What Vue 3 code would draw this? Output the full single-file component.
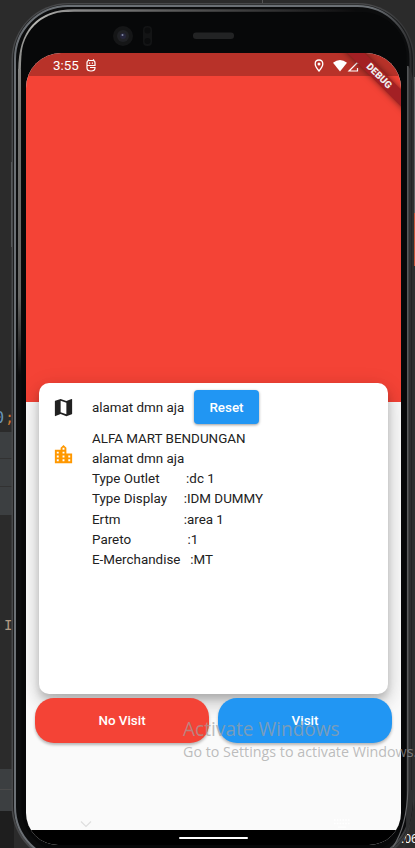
<script setup>
const details = [
  'ALFA MART BENDUNGAN',
  'alamat dmn aja',
  'Type Outlet        :dc 1',
  'Type Display     :IDM DUMMY',
  'Ertm                   :area 1',
  'Pareto                 :1',
  'E-Merchandise   :MT',
]
</script>

<template>
  <div class="desktop">
    <div class="editor">
      <div class="pane code"><span class="zero">0</span><span class="semi">;</span></div>
      <div class="pane rail tall"></div>
      <div class="pane body"><span>I</span></div>
      <div class="pane rail"></div>
      <div class="pane foot"></div>
    </div>
    <span class="notch"></span>
    <span class="edge"></span>
    <span class="edge low"></span>
    <span class="clock">:06</span>

    <div class="phone">
      <svg class="frame" viewBox="0 0 415 848" width="415" height="848">
        <defs>
          <linearGradient id="inner" gradientUnits="userSpaceOnUse" x1="0" y1="62" x2="0" y2="375">
            <stop offset="0" stop-color="#858583" />
            <stop offset=".2" stop-color="#6f6f6d" />
            <stop offset=".75" stop-color="#666664" />
            <stop offset="1" stop-color="#0c0c0d" />
          </linearGradient>
          <linearGradient id="rim" gradientUnits="userSpaceOnUse" x1="13" y1="0" x2="412" y2="0">
            <stop offset="0" stop-color="#6b7075" />
            <stop offset=".9" stop-color="#6b7075" />
            <stop offset=".98" stop-color="#3a3b3d" />
            <stop offset="1" stop-color="#2b2c2d" />
          </linearGradient>
          <linearGradient id="shell" gradientUnits="userSpaceOnUse" x1="11" y1="0" x2="415" y2="0">
            <stop offset="0" stop-color="#47484a" />
            <stop offset=".9" stop-color="#47484a" />
            <stop offset="1" stop-color="#343536" />
          </linearGradient>
          <linearGradient id="top" gradientUnits="userSpaceOnUse" x1="18" y1="0" x2="360" y2="0">
            <stop offset="0" stop-color="#8a8a88" />
            <stop offset=".05" stop-color="#b8b8b4" />
            <stop offset=".16" stop-color="#8a8a8a" />
            <stop offset=".45" stop-color="#5a5a5a" />
            <stop offset=".8" stop-color="#2a2a2b" />
            <stop offset="1" stop-color="#0a0a0b" />
          </linearGradient>
        </defs>
        <rect x="11.500" y="3" width="403" height="860" rx="57" fill="url(#shell)" />
        <rect x="13" y="4.500" width="400" height="856" rx="55" fill="#1b1c1d" />
        <rect x="15" y="6" width="395.500" height="854" rx="53" fill="#0b0c0d" stroke="url(#rim)" stroke-width="2" />
        <path d="M408 66Q414 72 414 96V780Q414 820 402 848H406L408 66Z" fill="#2e2f30" />
        <path d="M411.500 80V790" fill="none" stroke="#232425" stroke-width="1" />
        <path d="M19.500 70Q20 11 74 10.500H355" fill="none" stroke="url(#top)" stroke-width="2.600" />
        <rect x="18" y="69" width="3" height="306" fill="url(#inner)" />
        <rect x="21.500" y="12" width="385" height="841" rx="45" fill="#070809" />
        <path d="M407.800 66V790Q407 826 393 847" fill="none" stroke="#67686a" stroke-width="1.200" />
        <path d="M11.500 162V247" stroke="#55585a" />
        <circle cx="123" cy="36" r="10" fill="#151617" />
        <circle cx="123" cy="36" r="6" fill="#202125" />
        <circle cx="123" cy="36" r="3" fill="#25253b" />
        <circle cx="122.500" cy="35" r="1" fill="#8188a3" />
        <rect x="143" y="26" width="9" height="20" rx="4" fill="#131415" />
        <circle cx="147.500" cy="30.500" r="3" fill="#0b0c0d" />
        <circle cx="147.500" cy="41" r="3" fill="#0b0c0d" />
        <rect x="193" y="32.500" width="41" height="6.500" rx="3" fill="#222324" />
      </svg>

      <div class="screen">
        <header class="status">
          <span class="time">3:55</span>
          <svg class="droid" viewBox="0 0 10 13" width="10" height="13">
            <path d="M1 6.500H9V4Q9 1.500 7 1.500H3Q1 1.500 1 4V9Q1 12 5 12Q9 12 9 9V8.500H4M2.500 .300V1.500M7.500 .300V1.500M3 4.200H4.200M5.800 4.200H7" fill="none" stroke="#fff" stroke-width="1.200" />
          </svg>
          <span class="grow"></span>
          <svg class="pin" viewBox="0 0 10 13" width="10" height="13">
            <path d="M5 1Q1.200 1 1.200 5Q1.200 7.500 5 12Q8.800 7.500 8.800 5Q8.800 1 5 1Z" fill="none" stroke="#fff" stroke-width="1.300" />
            <circle cx="5" cy="5" r="1.500" fill="#fff" />
          </svg>
          <svg class="signal" viewBox="0 0 28 13" width="28" height="13">
            <path d="M0 3.800Q7 -2 14 3.800L7 12.500Z" fill="#fff" />
            <path d="M27 1 16 12H24.500V9M25.500 2.500V5" fill="none" stroke="#fff" stroke-width="1.200" />
          </svg>
        </header>
        <div class="hero"></div>
        <section class="card">
          <div class="row address">
            <svg class="icon" viewBox="0 0 24 24" width="23" height="23">
              <path fill="#212121" d="M20.500 3l-.16.03L15 5.100 9 3 3.360 4.900c-.21.07-.36.25-.36.480V20.500c0 .28.22.5.5.5l.16-.03L9 18.900l6 2.100 5.640-1.900c.21-.07.36-.25.36-.48V3.500c0-.28-.22-.5-.5-.5zM15 19l-6-2.110V5l6 2.110V19z" />
            </svg>
            <span>alamat dmn aja</span>
            <button class="reset">Reset</button>
          </div>
          <div class="row outlet">
            <svg class="icon" viewBox="0 0 24 24" width="23" height="23">
              <path fill="#ff9800" d="M15 11V5l-3-3-3 3v2H3v14h18V11h-6zm-8 8H5v-2h2v2zm0-4H5v-2h2v2zm0-4H5V9h2v2zm6 8h-2v-2h2v2zm0-4h-2v-2h2v2zm0-4h-2V9h2v2zm0-4h-2V5h2v2zm6 12h-2v-2h2v2zm0-4h-2v-2h2v2z" />
            </svg>
            <div class="lines">
              <div v-for="line in details" :key="line">{{ line }}</div>
            </div>
          </div>
        </section>
        <div class="actions">
          <button class="no">No Visit</button>
          <button class="yes">Visit</button>
        </div>
        <div class="hints">
          <svg viewBox="0 0 12 8" width="12" height="8"><path d="M1 1.500 6 6.500 11 1.500" fill="none" stroke="#dedede" stroke-width="1.200" /></svg>
          <svg viewBox="0 0 16 9" width="16" height="9"><path d="M0 1H16M0 4.500H16" stroke="#fff" stroke-width="1.600" stroke-dasharray="1.600 1.200" /><path d="M4 8H12" stroke="#fff" /></svg>
        </div>
        <footer class="nav"><span></span></footer>
        <div class="debug">DEBUG</div>
      </div>
    </div>

    <div class="watermark">
      <div class="big">Activate Windows</div>
      <div class="small">Go to Settings to activate Windows.</div>
    </div>
  </div>
</template>

<style>
body { margin: 0; background: #2b2b2b; overflow: hidden; }
</style>

<style scoped>
.desktop { position: relative; width: 415px; height: 848px; overflow: hidden; background: #2b2b2b; font-family: Roboto, sans-serif; }
.editor { display: flex; flex-direction: column; width: 14px; height: 848px; font-family: "DejaVu Sans Mono", monospace; }
.pane { box-sizing: border-box; overflow: hidden; flex: none; }
.code { height: 432px; padding-top: 409px; display: flex; font-size: 15px; line-height: 18px; }
.zero { color: #6897bb; margin-left: -5px; }
.semi { color: #cc7832; margin-left: 1px; }
.rail { height: 42px; background: linear-gradient(#3c3f41 20px, #4b4b4b 20px, #4b4b4b 21px, #3c3f41 21px); }
.rail.tall { height: 83px; background: linear-gradient(#3c3f41 26px, #323232 26px, #323232 27px, #3c3f41 27px, #3c3f41 54px, #323232 54px, #323232 55px, #3c3f41 55px); }
.body { height: 254px; padding: 101px 0 0 4px; font-size: 14px; line-height: 18px; color: #b09a83; }
.foot { height: 37px; background: #1e1e1e; }
.notch { position: absolute; left: 262px; top: 0; width: 1px; height: 4px; background: #555; }
.edge { position: absolute; left: 414px; top: 213px; width: 1px; height: 53px; background: #c65338; z-index: 2; }
.edge.low { top: 77px; height: 136px; background: #606162; }
.clock { position: absolute; left: 401px; top: 831px; font: 12px/16px "Open Sans", sans-serif; color: #fff; }
.phone { position: absolute; inset: 0; }
.frame { position: absolute; left: 0; top: 0; clip-path: path("M0 0H415V800L405 848H0Z"); }
.screen { position: absolute; left: 26px; top: 53px; width: 375px; height: 792px; display: flex; flex-direction: column; overflow: hidden; border-radius: 35px 35px 32px 32px; background: #fafafa; }
.status { flex: none; box-sizing: border-box; height: 23px; background: #b83229; display: flex; align-items: center; padding: 0 40px 0 27px; color: #fff; }
.time { font-size: 13.400px; line-height: 23px; padding-top: 2px; }
.droid { margin-left: 7px; margin-top: 1px; }
.grow { flex: 1; }
.pin { margin-right: 9px; margin-top: 1px; }
.signal { margin-top: 1px; }
.hero { flex: none; height: 326px; background: #f44336; }
.card { flex: none; position: relative; box-sizing: border-box; height: 311px; margin: -19px 13px 0; padding: 7px 13px 0; background: #fff; border-radius: 10px; box-shadow: 0 5px 6px rgba(0, 0, 0, .12), 0 10px 18px rgba(0, 0, 0, .14), 0 4px 22px rgba(0, 0, 0, .12); font-size: 13.400px; color: #212121; }
.row { display: flex; }
.icon { flex: none; margin-right: 17px; }
.address { height: 34px; align-items: center; }
.address span { width: 102px; white-space: nowrap; }
button { border: 0; padding: 0; color: #fff; font: 500 13.400px Roboto, sans-serif; }
.reset { width: 65px; height: 34px; border-radius: 4px; background: #2196f3; box-shadow: 0 1px 3px rgba(0, 0, 0, .4); }
.outlet { padding-top: 5px; }
.outlet .icon { margin-top: 14px; }
.lines { white-space: pre; line-height: 20.150px; }
.actions { flex: none; position: relative; display: flex; gap: 9px; padding: 4px 9px 0; height: 45px; }
.actions button { flex: 1; height: 45px; border-radius: 19px; background: #f44336; box-shadow: 0 2px 3px rgba(0, 0, 0, .28); }
.actions .yes { background: #2196f3; }
.hints { flex: 1; display: flex; justify-content: space-between; align-items: flex-end; padding: 0 51px 2px 54px; }
.nav { flex: none; height: 15px; background: #000; display: flex; justify-content: center; align-items: center; }
.nav span { width: 69px; height: 2px; border-radius: 1px; background: #fff; }
.debug { position: absolute; right: -33px; top: 17px; width: 110px; height: 12px; transform: rotate(45deg); background: #a32024; box-shadow: 0 0 6px rgba(0, 0, 0, .5); color: #eee; text-align: center; font-weight: 900; font-size: 9.800px; line-height: 12px; }
.watermark { position: absolute; left: 183px; top: 716px; white-space: nowrap; font-family: "Open Sans", "Noto Sans", sans-serif; color: rgba(160, 160, 160, .7); }
.big { font-size: 19.100px; line-height: 26px; }
.small { font-size: 14.300px; line-height: 20px; }
</style>
